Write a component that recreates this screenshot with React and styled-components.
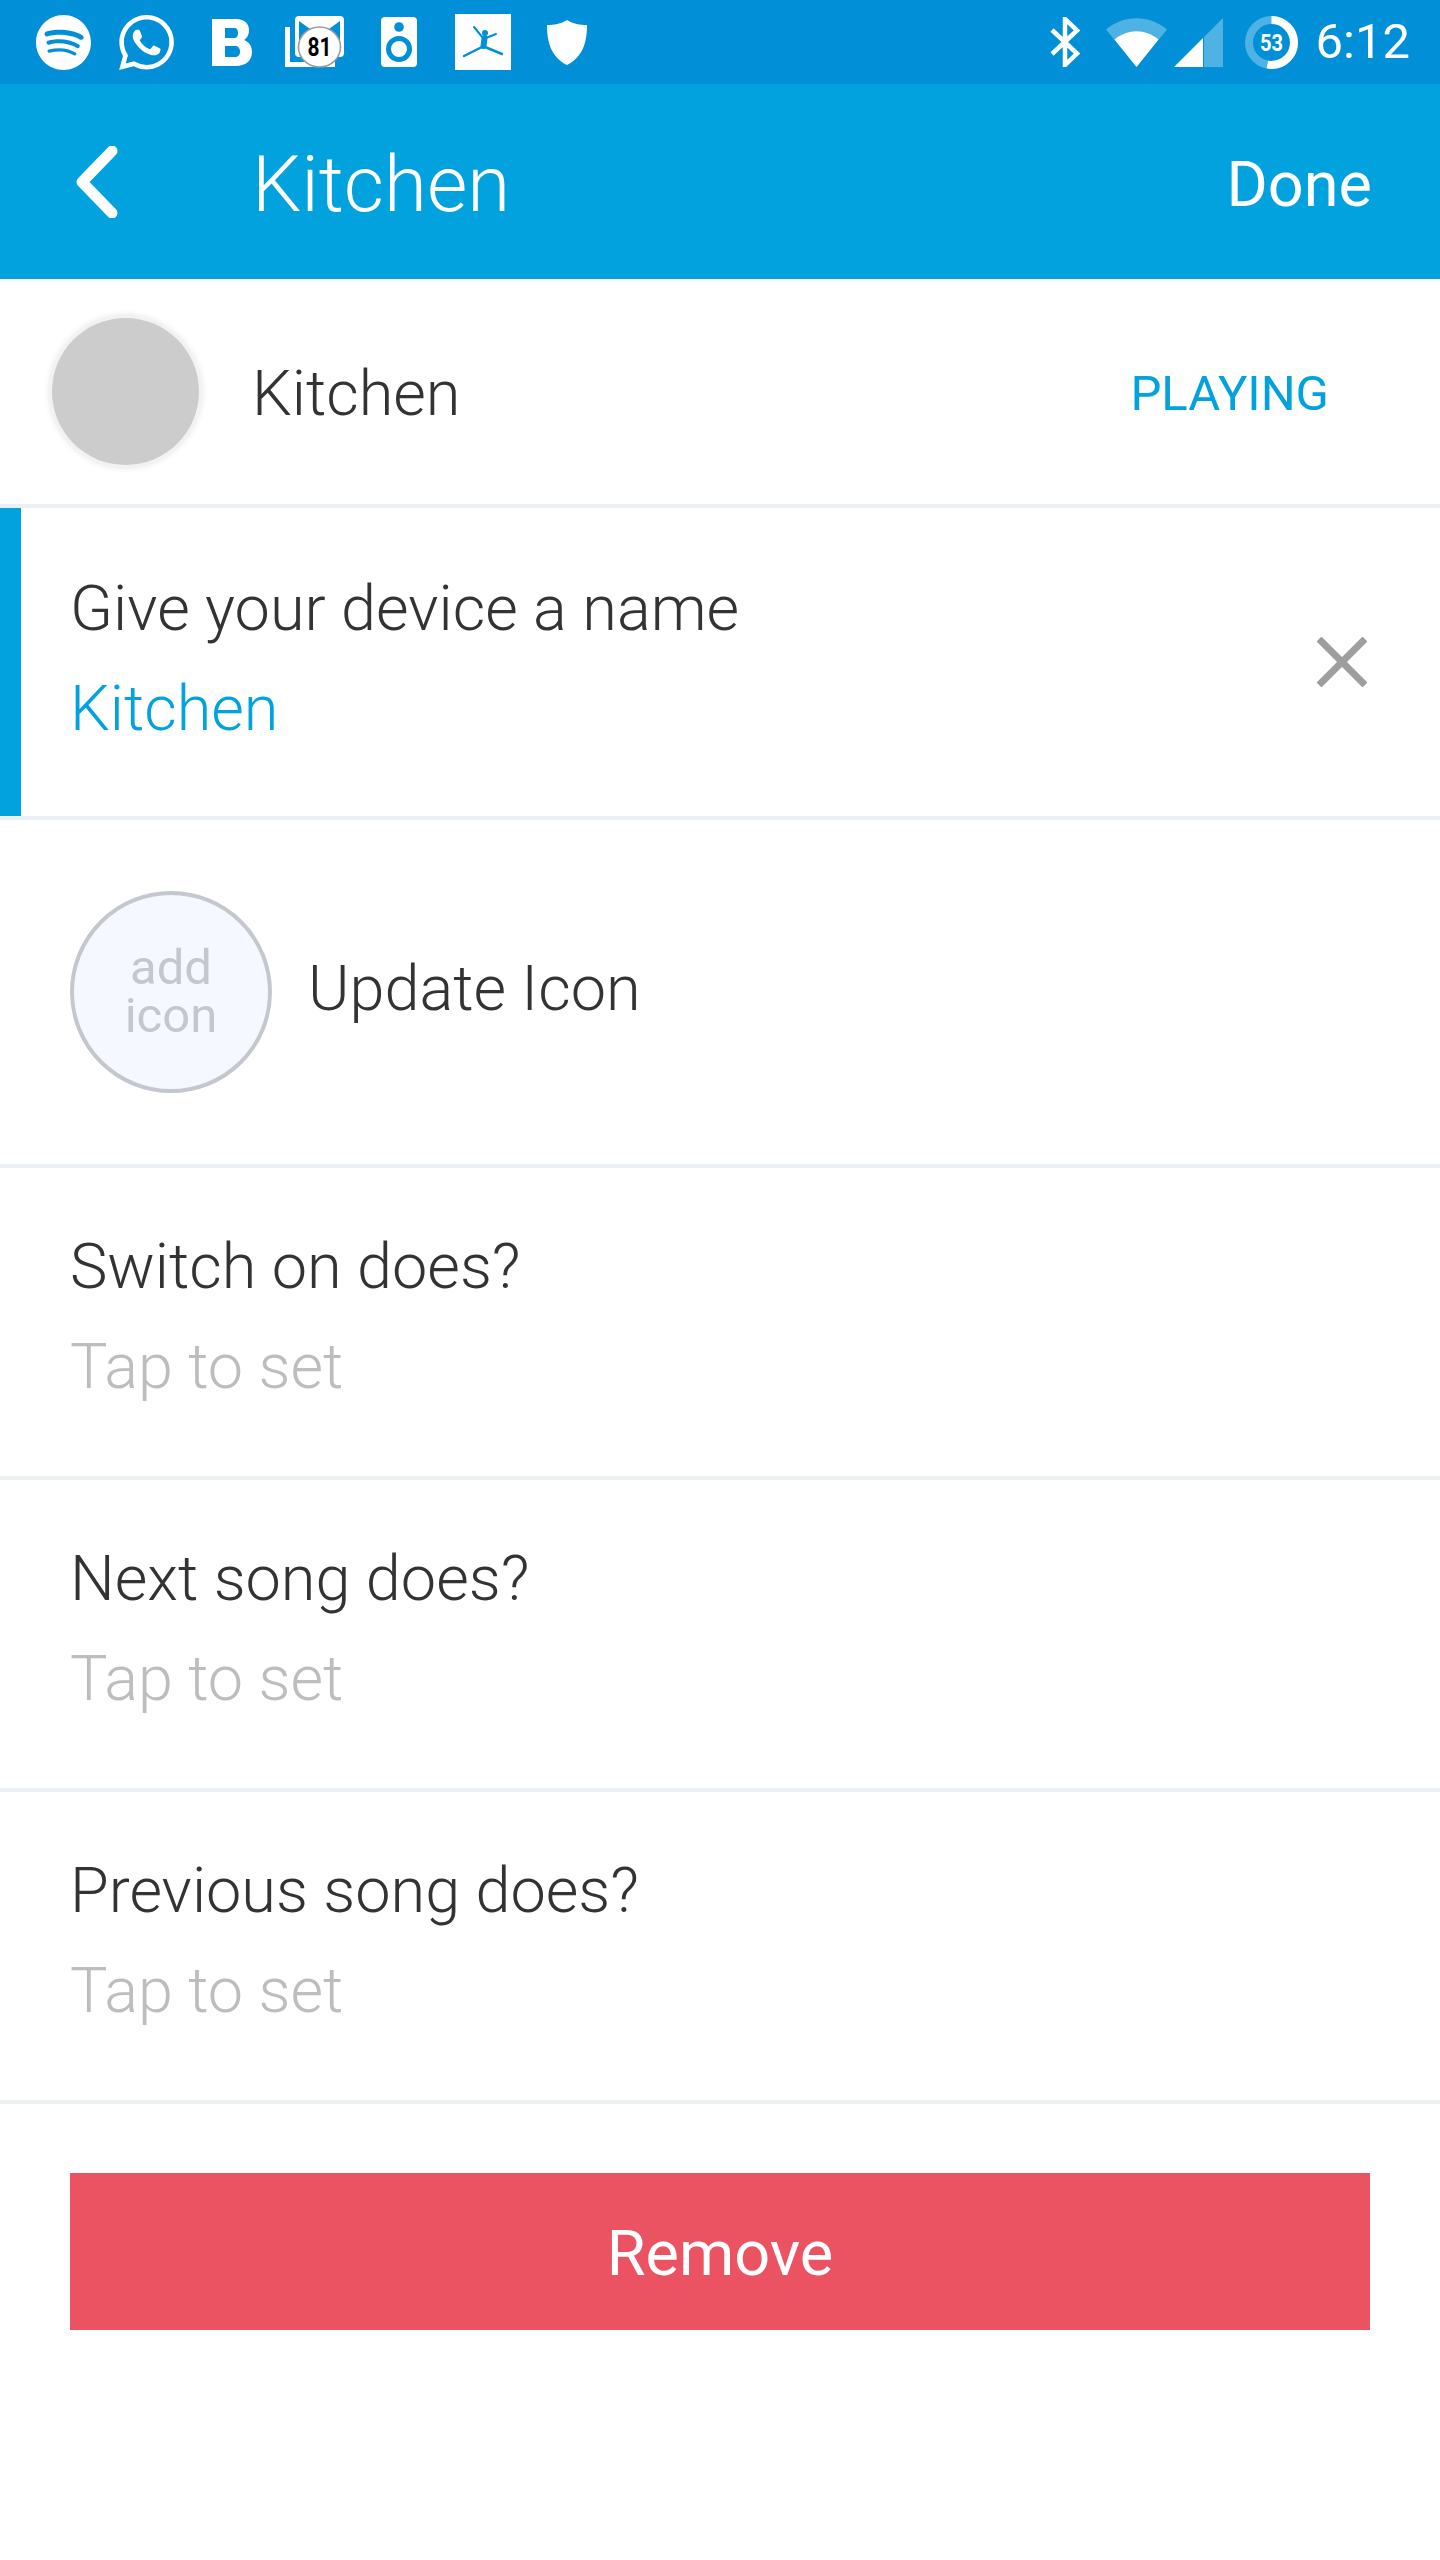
import React from 'react';
import styled, { createGlobalStyle } from 'styled-components';
import { SiSpotify, SiWhatsapp } from 'react-icons/si';

const BLUE = '#02a2de';
const BAR = '#0190d8';
const FAINT = '#4fb2e4';
const RULE = '#edf0f3';

const Global = createGlobalStyle`
  html, body { margin: 0; padding: 0; background: #fff; }
  body { font-family: Roboto, "Noto Sans", sans-serif; }
`;
const Page = styled.div`width: 1440px; height: 2560px; background: #fff; overflow: hidden;`;
const StatusBar = styled.div`height: 84px; background: ${BAR}; display: flex; align-items: center; justify-content: space-between; padding: 0 30px 0 36px; color: #fff;`;
const Group = styled.div`display: flex; align-items: center;`;
const Slot = styled.div`display: flex; margin-left: ${p => p.$ml || 0}px; color: #fff;`;
const Clock = styled.span`font-size: 49px; font-weight: 400; margin-left: 18px; line-height: 84px;`;
const Header = styled.header`height: 195px; background: ${BLUE}; display: flex; align-items: center; color: #fff; padding: 0 68px 0 76px;`;
const Back = styled.div`width: 176px; display: flex; align-items: center;`;
const Title = styled.h1`flex: 1; margin: 0; padding-top: 6px; font-size: 78px; font-weight: 300;`;
const Done = styled.span`font-size: 63px; font-weight: 400; padding-top: 5px;`;
const DeviceRow = styled.div`height: 225px; display: flex; align-items: center; padding: 0 111px 0 52px; border-bottom: 4px solid ${RULE};`;
const Avatar = styled.div`width: 147px; height: 147px; border-radius: 50%; background: #cccccc; box-shadow: 0 0 0 3px #f2f2f2, 0 0 6px 3px #e6e6e6; margin-right: 53px;`;
const DeviceName = styled.span`flex: 1; font-size: 63px; font-weight: 300; color: #333; padding-top: 3px;`;
const Playing = styled.span`font-size: 49px; color: ${BLUE}; padding-top: 3px;`;
const Row = styled.div`height: ${p => p.$h || 312}px; box-sizing: border-box; border-bottom: 4px solid ${RULE}; display: flex; align-items: center; justify-content: space-between; padding: 0 70px;`;
const ActiveRow = styled(Row)`box-shadow: inset 21px 0 0 ${BLUE}; padding-right: 73px;`;
const Stack = styled.div`display: flex; flex-direction: column; gap: 26px; padding-bottom: ${p => p.$lift || 10}px;`;
const Label = styled.div`font-size: 63px; font-weight: 300; color: #333; line-height: 74px;`;
const IconLabel = styled(Label)`padding-bottom: 7px;`;
const Value = styled.div`font-size: 63px; font-weight: 300; line-height: 74px; color: ${p => p.$active ? BLUE : '#bdbdbd'};`;
const IconRow = styled(Row)`justify-content: flex-start; gap: 36px;`;
const AddIcon = styled.div`width: 202px; height: 202px; box-sizing: border-box; padding: 0 40px; border: 4px solid #c5c7cf; border-radius: 50%; background: #f5f8fe; color: #c5c7cf; font-size: 49px; line-height: 48px; display: flex; align-items: center; justify-content: center; text-align: center;`;
const Footer = styled.div`padding: 69px 70px;`;
const Remove = styled.button`width: 100%; height: 157px; background: #eb5363; border: 0; color: #fff; font: 400 63px Roboto, sans-serif; display: block; padding: 4px 0 0;`;

const BackIcon = () => (
  <svg width="42" height="72" viewBox="0 0 42 72"><path d="M36 5 L6 36 L36 67" fill="none" stroke="#fff" strokeWidth="11" strokeLinecap="round" strokeLinejoin="round"/></svg>
);
const CloseIcon = () => (
  <svg width="50" height="50" viewBox="0 0 50 50"><path d="M2 2 L48 48 M48 2 L2 48" stroke="#9e9e9e" strokeWidth="7"/></svg>
);
const BIcon = () => (
  <svg width="40" height="47" viewBox="0 0 40 47"><path fillRule="evenodd" fill="#fff" d="M0 0H24C33 0 37 5 37 11c0 5-2 8-5 10 5 2 8 6 8 12 0 9-7 14-16 14H0Z M13 9v10h9c3 0 4-2 4-5 0-3-1-5-4-5z M13 27v11h10c3 0 5-2 5-5.5S26 27 23 27z"/></svg>
);
const MailIcon = () => (
  <svg width="59" height="52" viewBox="0 0 59 52">
    <path d="M2.5 11V48.500H50" fill="none" stroke="#fff" strokeWidth="5"/>
    <rect x="10" y="0" width="49" height="41" rx="4" fill="#fff"/>
    <path d="M14 5L32 18L14 36Z M55 5L37 18L55 36Z" fill={BAR}/>
    <ellipse cx="34.500" cy="31" rx="21" ry="20" fill="#fff" stroke="#9a9a9a" strokeWidth="1.500"/>
    <text x="34.500" y="40" textAnchor="middle" fontFamily="Roboto, sans-serif" fontWeight="700" fontSize="25" fill="#000" textLength="24" lengthAdjust="spacingAndGlyphs">81</text>
  </svg>
);
const SpeakerIcon = () => (
  <svg width="36" height="50" viewBox="0 0 36 50">
    <rect width="36" height="50" rx="4" fill="#fff"/>
    <circle cx="18" cy="10" r="4.800" fill={BAR}/>
    <circle cx="18" cy="32" r="10.500" fill="#fff" stroke={BAR} strokeWidth="5"/>
  </svg>
);
const PalIcon = () => (
  <svg width="56" height="56" viewBox="0 0 56 56">
    <rect width="56" height="56" fill="#fff"/>
    <g stroke={BAR} strokeLinecap="round" fill="none">
      <path d="M19 13L28 24M41 20L31 24" strokeWidth="2"/>
      <path d="M29.500 24L28.500 32" strokeWidth="6"/>
      <path d="M27 33L9 42M30 33L47 40" strokeWidth="2.500"/>
    </g>
    <circle cx="30" cy="19" r="3" fill={BAR}/>
  </svg>
);
const ShieldIcon = () => (
  <svg width="40" height="45" viewBox="0 0 40 45"><path fill="#fff" d="M20 0C26 4 33 5 40 5C40 22 36 37 20 45C4 37 0 22 0 5C7 5 14 4 20 0Z"/></svg>
);
const BluetoothIcon = () => (
  <svg width="30" height="50" viewBox="0 0 30 50"><path d="M2 13L27 36.500L15 48V2L27 13.500L2 37" fill="none" stroke="#fff" strokeWidth="4.500"/></svg>
);
const WifiIcon = () => (
  <svg width="61" height="49" viewBox="0 0 61 49">
    <path d="M0 11.500C18-3.500 43-3.500 61 11.500L30.500 49Z" fill={FAINT}/>
    <path d="M8.500 21.500C22 10.500 39 10.500 52.500 21.500L30.500 49Z" fill="#fff"/>
  </svg>
);
const SignalIcon = () => (
  <svg width="49" height="49" viewBox="0 0 49 49">
    <path d="M30 19L49 0V49H30Z" fill={FAINT}/>
    <path d="M0 49L29 20V49Z" fill="#fff"/>
  </svg>
);
const BatteryIcon = () => (
  <svg width="53" height="53" viewBox="0 0 53 53">
    <circle cx="26.500" cy="26.500" r="22.500" fill="none" stroke={FAINT} strokeWidth="8"/>
    <circle cx="26.500" cy="26.500" r="22.500" fill="none" stroke="#fff" strokeWidth="8" pathLength="100" strokeDasharray="53 47" transform="rotate(-90 26.500 26.500)"/>
    <text x="26.500" y="35" textAnchor="middle" fontFamily="Roboto, sans-serif" fontWeight="700" fontSize="24" fill="#fff" textLength="23" lengthAdjust="spacingAndGlyphs">53</text>
  </svg>
);

export default function App() {
  return (
    <Page>
      <Global />
      <StatusBar>
        <Group>
          <Slot><SiSpotify size={55} /></Slot>
          <Slot $ml={28}><SiWhatsapp size={55} /></Slot>
          <Slot $ml={38}><BIcon /></Slot>
          <Slot $ml={33}><MailIcon /></Slot>
          <Slot $ml={37}><SpeakerIcon /></Slot>
          <Slot $ml={38}><PalIcon /></Slot>
          <Slot $ml={36}><ShieldIcon /></Slot>
        </Group>
        <Group>
          <BluetoothIcon />
          <Slot $ml={26}><WifiIcon /></Slot>
          <Slot $ml={7}><SignalIcon /></Slot>
          <Slot $ml={22}><BatteryIcon /></Slot>
          <Clock>6:12</Clock>
        </Group>
      </StatusBar>
      <Header>
        <Back><BackIcon /></Back>
        <Title>Kitchen</Title>
        <Done>Done</Done>
      </Header>
      <DeviceRow>
        <Avatar />
        <DeviceName>Kitchen</DeviceName>
        <Playing>PLAYING</Playing>
      </DeviceRow>
      <ActiveRow>
        <Stack $lift={7}><Label>Give your device a name</Label><Value $active>Kitchen</Value></Stack>
        <CloseIcon />
      </ActiveRow>
      <IconRow $h={348}>
        <AddIcon>add icon</AddIcon>
        <IconLabel>Update Icon</IconLabel>
      </IconRow>
      <Row><Stack><Label>Switch on does?</Label><Value>Tap to set</Value></Stack></Row>
      <Row><Stack><Label>Next song does?</Label><Value>Tap to set</Value></Stack></Row>
      <Row><Stack><Label>Previous song does?</Label><Value>Tap to set</Value></Stack></Row>
      <Footer><Remove>Remove</Remove></Footer>
    </Page>
  );
}
